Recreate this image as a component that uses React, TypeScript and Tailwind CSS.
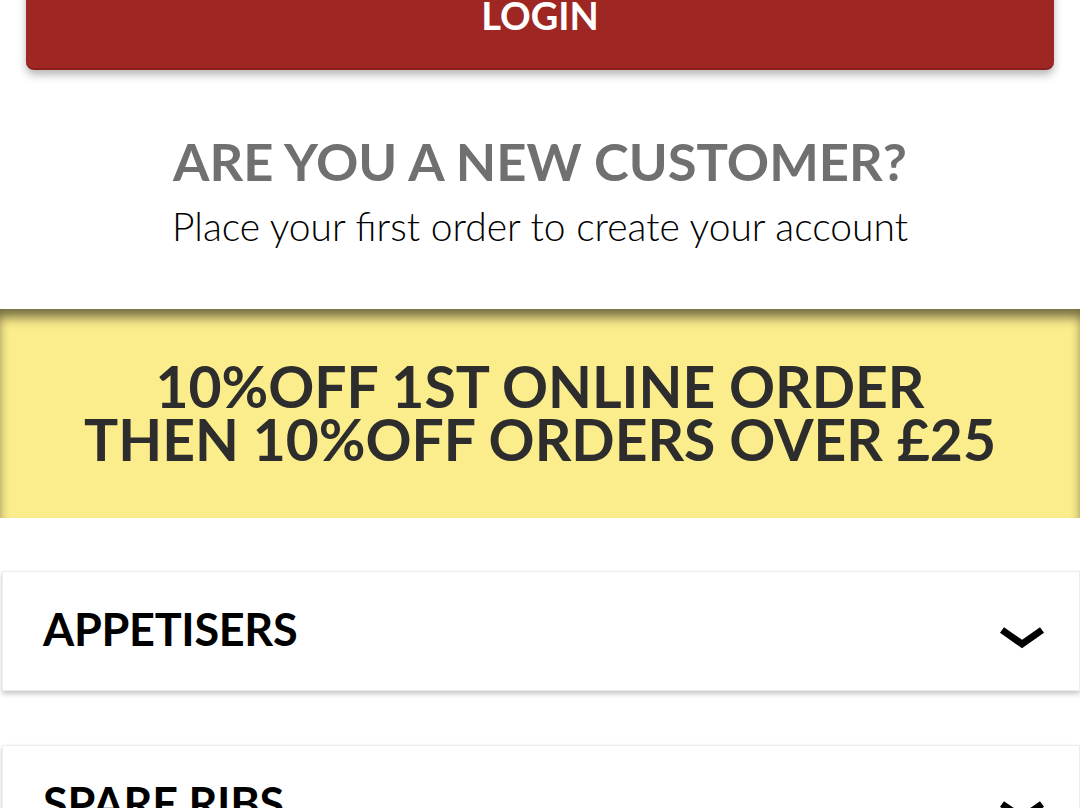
import { ReactNode } from "react";

const categories = ["APPETISERS", "SPARE RIBS"];

function Chevron() {
  return (
    <svg width="48" height="24" viewBox="0 0 48 24" fill="none" className="mt-[14px]">
      <path
        d="M4 4 L24 18 L44 4"
        stroke="#000"
        strokeWidth="7"
        strokeLinejoin="miter"
      />
    </svg>
  );
}

function CategoryCard({ children }: { children: ReactNode }) {
  return (
    <div className="ml-[2px] h-[120px] bg-white border border-[#ececec] shadow-[0_3px_5px_rgba(0,0,0,0.22)] flex items-center justify-between pl-[40px] pr-[33px]">
      <span className="text-[45px] font-bold text-black tracking-[-0.3px] -mt-[1px]">
        {children}
      </span>
      <Chevron />
    </div>
  );
}

export default function App() {
  return (
    <div
      className="w-[1080px] h-[808px] overflow-hidden bg-white"
      style={{ fontFamily: "Lato, 'Liberation Sans', sans-serif" }}
    >
      <div className="px-[26px]">
        <button className="w-full h-[120px] -mt-[50px] bg-[#9e2723] rounded-[8px] border-b-2 border-[#8a1f1c] shadow-[0_5px_9px_rgba(0,0,0,0.28)] flex items-center justify-center">
          <span className="text-white font-bold text-[38px] mt-[13px]">LOGIN</span>
        </button>
      </div>

      <div className="flex flex-col items-center pt-[65px]">
        <h2 className="text-[52.5px] font-bold text-[#707070] leading-none">
          ARE YOU A NEW CUSTOMER?
        </h2>
        <p className="mt-[19px] text-[39px] font-light text-black leading-none">
          Place your first order to create your account
        </p>
      </div>

      <div className="mt-[63px] h-[209px] bg-[#fbec8c] shadow-[inset_0_10px_12px_-2px_rgba(0,0,0,0.55)] flex flex-col items-center justify-center">
        <p className="text-[57px] font-bold text-[#2d2d2d] leading-[53px] text-center">
          10%OFF 1ST ONLINE ORDER
        </p>
        <p className="text-[57px] font-bold text-[#2d2d2d] leading-[53px] text-center">
          THEN 10%OFF ORDERS OVER £25
        </p>
      </div>

      <div className="pt-[53px] flex flex-col gap-[54px]">
        {categories.map((c) => (
          <CategoryCard key={c}>{c}</CategoryCard>
        ))}
      </div>
    </div>
  );
}
